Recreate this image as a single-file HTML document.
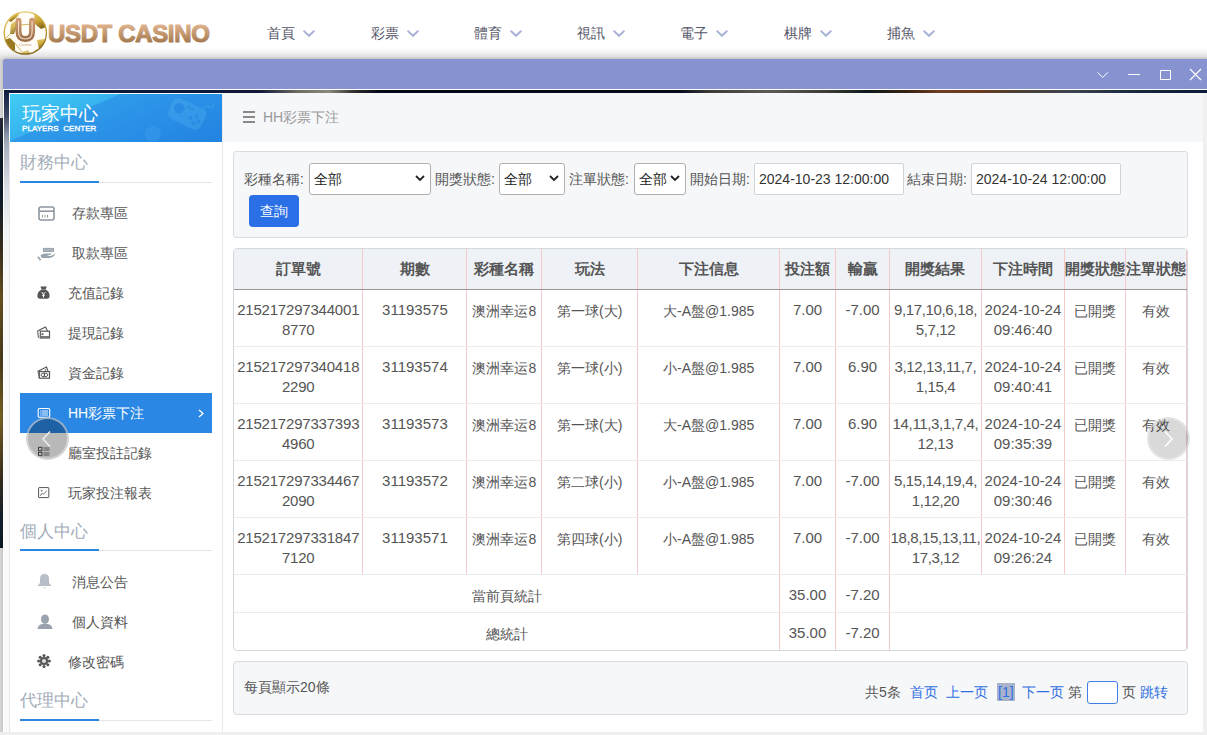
<!DOCTYPE html>
<html><head><meta charset="utf-8">
<style>
*{margin:0;padding:0;box-sizing:border-box}
html,body{width:1207px;height:735px;overflow:hidden;background:#fff;font-family:"Liberation Sans",sans-serif;position:relative}
.a{position:absolute}
/* header */
#logo{left:3px;top:10px;width:46px;height:46px}
#brand{left:47px;top:19px;font-size:24px;font-weight:bold;letter-spacing:-0.6px;white-space:nowrap;line-height:30px;background:linear-gradient(180deg,#dcb18c 25%,#a57a4e 80%);-webkit-background-clip:text;background-clip:text;color:transparent;-webkit-text-stroke:1.1px #b48860}
.nav{top:24px;font-size:14px;color:#555568;line-height:18px;white-space:nowrap}
.nav svg{position:absolute;left:36px;top:6px}
/* page bg */
#pgray{left:0;top:59px;width:1207px;height:676px;background:#dcdcdc}
#pshadow{left:0;top:48px;width:1207px;height:11px;background:linear-gradient(180deg,rgba(0,0,0,0),rgba(0,0,0,.13))}
#pdark{left:0;top:118px;width:3px;height:430px;background:linear-gradient(180deg,#2a2e38 0px,#0e1a2a 30px,#101c2c 80px,#3a3020 130px,#6a5420 180px,#4a3c1c 240px,#7a6224 300px,#3a3020 360px,#152030 400px,#0e1a28 430px)}
/* modal */
#modal{left:3px;top:59px;width:1210px;height:673px;background:#fff;border-radius:2px 0 0 0;box-shadow:0 0 4px rgba(0,0,0,.25)}
#title{left:3px;top:59px;width:1204px;height:30px;background:#8792d0;border-radius:2px 0 0 0}
#mbg{left:4px;top:90px;width:1203px;height:642px;background:linear-gradient(180deg,#0d1a3a 0px,#16244a 5px,#3a4560 25px,#8a93a8 45px,#a8b0c0 55px,#d8dce4 95px,#f2f3f5 140px,#fafafa 200px,#fafafa 100%)}
#panel{left:9px;top:93px;width:1194px;height:639px;background:#fff;border:1px solid #fff}
#side{left:10px;top:94px;width:213px;height:638px;background:#fff;border-right:1px solid #e8eaee}
#shead{left:10px;top:94px;width:212px;height:48px;background:linear-gradient(157deg,#41cdf4 0%,#37b3ef 33.5%,#2e9ae9 34.5%,#2a90e7 60%,#2183e1 100%);overflow:hidden}
.sec{left:20px;font-size:17px;color:#a3adb9;line-height:20px;white-space:nowrap}
.secl{left:20px;width:192px;height:1px;background:#e3e6ea}
.secb{left:20px;width:79px;height:2px;background:#2a86e0}
.item{left:20px;width:192px;height:40px}
.item .t{position:absolute;top:11px;font-size:14px;color:#555;line-height:18px;white-space:nowrap}
.item svg{position:absolute}
#active{background:#2a87e3}
/* content */
#chead{left:223px;top:93px;width:980px;height:49px;background:#f6f7f9}
#crumb{left:243px;top:108px;font-size:14px;color:#999;line-height:18px;white-space:nowrap}
#filter{left:233px;top:151px;width:955px;height:87px;background:#f6f7f9;border:1px solid #d9dde2;border-radius:3px}
.lbl{top:170px;font-size:14px;color:#555;line-height:18px;white-space:nowrap}
.sel{top:163px;height:32px;background:#fff;border:1px solid #b0b0b0;border-radius:3px;font-size:14px;color:#222;line-height:30px;padding-left:4px;white-space:nowrap}
.sel svg{position:absolute;right:5px;top:11px}
.inp{top:163px;height:32px;background:#fff;border:1px solid #d0d4d9;border-radius:2px;font-size:14px;color:#333;line-height:30px;padding-left:4px;white-space:nowrap}
#btn{left:249px;top:195px;width:50px;height:32px;background:#2a6fe6;border-radius:4px;color:#fff;font-size:14px;line-height:32px;text-align:center}
/* table */
#tbl{left:233px;top:248px;width:955px;height:403px;border:1px solid #d3d8de;border-radius:4px;overflow:hidden;background:#fff}
table{border-collapse:collapse;table-layout:fixed;position:absolute;left:0;top:0}
th{height:40px;padding-top:2px !important;background:#eef2f6;font-size:15px;font-weight:bold;color:#555;border-right:1px solid #f3c9c9;border-bottom:1px solid #9e9696;padding:0;white-space:nowrap;overflow:visible}
td{height:57px;font-size:14px;color:#555;border-right:1px solid #f3c9c9;border-bottom:1px solid #ebebeb;text-align:center;vertical-align:top;padding-top:12px;line-height:19px;white-space:nowrap}
.n{font-size:15px;position:relative;top:-2px}
.o{letter-spacing:-0.2px}
.r{letter-spacing:-0.35px}
tr.s td{height:38px;vertical-align:top;padding-top:12px}
/* pager */
#pager{left:233px;top:661px;width:955px;height:54px;background:#f6f7f9;border:1px solid #d5dbe0;border-radius:4px}
.pg{top:683px;font-size:14px;line-height:18px;color:#555;white-space:nowrap}
.bl{color:#2f6fe2}
/* carousel arrows */
.circ{width:43px;height:43px;border-radius:50%;border:2px solid rgba(235,235,235,.55)}
</style></head><body>
<div class="a" id="pgray"></div>
<div class="a" id="pshadow"></div>
<div class="a" id="pdark"></div>
<!-- header -->
<svg class="a" style="left:2px;top:9px" width="48" height="48" viewBox="0 0 48 48">
  <defs>
    <linearGradient id="gold" x1="0" y1="0" x2=".3" y2="1"><stop offset="0" stop-color="#e9cf6a"/><stop offset=".55" stop-color="#c9a436"/><stop offset="1" stop-color="#8a6a1e"/></linearGradient>
    <linearGradient id="cu" x1="0" y1="0" x2="0" y2="1"><stop offset="0" stop-color="#cf9b72"/><stop offset="1" stop-color="#9c6e46"/></linearGradient>
    <clipPath id="cc"><circle cx="23.3" cy="24" r="21.6"/></clipPath>
  </defs>
  <circle cx="23.3" cy="24" r="21.6" fill="#fffdf6"/>
  <g clip-path="url(#cc)" fill="url(#gold)">
    <path d="M5 11 Q11 5 18 3.5 L15 8 L9 13 Z"/>
    <path d="M32 4 L41 9 L44 18 L39 20 L33 15 Z"/>
    <path d="M9 15 L13 12 L16 16 L12 25 L8 25 Z" opacity=".85"/>
    <path d="M2 31 L8 29 L13 34 L13 41 L8 43 L3 38 Z" fill="#9a7820"/>
    <path d="M35 31 L42 30 L45 32 L43 39 L37 40 Z"/>
    <path d="M20 43 L26 41 L29 46 L19 46 Z" opacity=".7"/>
    <path d="M13 34 L20 43 M29 46 L35 40 M16 16 L32 15 M8 25 L2 31" stroke="#c9a436" stroke-width=".8" fill="none"/>
  </g>
  <circle cx="23.3" cy="24" r="21.1" fill="none" stroke="url(#gold)" stroke-width="1.3"/>
  <path d="M16.5 11.8 V22.5 Q16.5 30 23.3 30 Q30.1 30 30.1 22.5 V11.8" fill="none" stroke="url(#cu)" stroke-width="6" stroke-linecap="round"/>
  <path d="M16.5 12.5 V22.5 Q16.5 30 23.3 30 Q30.1 30 30.1 22.5 V12.5" fill="none" stroke="#f6eadc" stroke-width="1.1" stroke-linecap="round" opacity=".9"/>
  <text x="23.3" y="36.5" font-family="Liberation Sans" font-size="4" fill="#c9a07c" text-anchor="middle">Casino</text>
</svg>
<svg class="a" style="left:46px;top:18px" width="170" height="30" viewBox="0 0 170 30"><defs><linearGradient id="bg1" x1="0" y1="0" x2="0" y2="1"><stop offset=".2" stop-color="#dcb08a"/><stop offset=".85" stop-color="#a3784e"/></linearGradient></defs><text x="2" y="24" font-family="Liberation Sans" font-weight="bold" font-size="24" letter-spacing="-0.35" fill="url(#bg1)" stroke="url(#bg1)" stroke-width="1.1" stroke-linejoin="round">USDT CASINO</text></svg>
<div class="a nav" style="left:267px">首頁<svg width="12" height="7" viewBox="0 0 12 7"><path d="M1.2 1.2 L6 5.8 L10.8 1.2" fill="none" stroke="#a8b2d6" stroke-width="1.9" stroke-linecap="round"/></svg></div>
<div class="a nav" style="left:371px">彩票<svg width="12" height="7" viewBox="0 0 12 7"><path d="M1.2 1.2 L6 5.8 L10.8 1.2" fill="none" stroke="#a8b2d6" stroke-width="1.9" stroke-linecap="round"/></svg></div>
<div class="a nav" style="left:474px">體育<svg width="12" height="7" viewBox="0 0 12 7"><path d="M1.2 1.2 L6 5.8 L10.8 1.2" fill="none" stroke="#a8b2d6" stroke-width="1.9" stroke-linecap="round"/></svg></div>
<div class="a nav" style="left:577px">視訊<svg width="12" height="7" viewBox="0 0 12 7"><path d="M1.2 1.2 L6 5.8 L10.8 1.2" fill="none" stroke="#a8b2d6" stroke-width="1.9" stroke-linecap="round"/></svg></div>
<div class="a nav" style="left:680px">電子<svg width="12" height="7" viewBox="0 0 12 7"><path d="M1.2 1.2 L6 5.8 L10.8 1.2" fill="none" stroke="#a8b2d6" stroke-width="1.9" stroke-linecap="round"/></svg></div>
<div class="a nav" style="left:784px">棋牌<svg width="12" height="7" viewBox="0 0 12 7"><path d="M1.2 1.2 L6 5.8 L10.8 1.2" fill="none" stroke="#a8b2d6" stroke-width="1.9" stroke-linecap="round"/></svg></div>
<div class="a nav" style="left:887px">捕魚<svg width="12" height="7" viewBox="0 0 12 7"><path d="M1.2 1.2 L6 5.8 L10.8 1.2" fill="none" stroke="#a8b2d6" stroke-width="1.9" stroke-linecap="round"/></svg></div>

<!-- modal -->
<div class="a" id="modal"></div>
<div class="a" id="title"></div>
<svg class="a" style="left:1096px;top:71px" width="14" height="8" viewBox="0 0 14 8"><path d="M1.5 1.3 L6.7 6.5 L11.9 1.3" fill="none" stroke="#fff" stroke-width="1"/></svg>
<div class="a" style="left:1128px;top:74px;width:12px;height:1px;background:#fff"></div>
<div class="a" style="left:1160px;top:70px;width:11px;height:10px;border:1px solid #fff"></div>
<svg class="a" style="left:1189px;top:68px" width="13" height="13" viewBox="0 0 13 13"><path d="M1 1 L12 12 M12 1 L1 12" stroke="#fff" stroke-width="1.2"/></svg>
<div class="a" id="mbg"></div>
<div class="a" style="left:9px;top:90px;width:1198px;height:3px;background:linear-gradient(90deg,#0e1a3a 0px,#10193a 250px,#6e6e66 290px,#8a8a80 320px,#303030 345px,#05081a 370px,#060a1c 670px,#3a3a3a 700px,#5a5a58 760px,#3a3a38 820px,#0a1a1a 860px,#3a2418 900px,#6e3c22 930px,#6a3a22 970px,#4a4038 1010px,#3e4450 1060px,#1a2a40 1120px,#0a1a3a 1198px)"></div>
<div class="a" id="panel"></div>
<div class="a" style="left:9px;top:142px;width:1px;height:590px;background:#e6e6e6"></div>

<!-- sidebar -->
<div class="a" id="side"></div>
<div class="a" id="shead">
  <svg style="position:absolute;left:114px;top:0" width="94" height="47" viewBox="0 0 82 47">
    <g transform="translate(57 20) rotate(25) scale(.95) translate(-57 -20)">
      <path d="M38 14 Q38 8 46 8 L68 8 Q76 8 76 14 L76 24 Q76 32 68 32 L46 32 Q38 32 38 24 Z" fill="#5cb8f2" opacity=".28"/>
      <circle cx="47" cy="18" r="5.5" fill="#2587e2" opacity=".7"/>
      <circle cx="62" cy="22" r="2" fill="#2587e2" opacity=".7"/><circle cx="67" cy="18" r="2" fill="#2587e2" opacity=".7"/><circle cx="67" cy="26" r="2" fill="#2587e2" opacity=".7"/><circle cx="71" cy="22" r="2" fill="#2587e2" opacity=".7"/>
      <path d="M54 13 H58 M59 13 H62" stroke="#2587e2" stroke-width="1.5" opacity=".7"/>
      <path d="M70 8 Q72 2 76 3 Q79 4 78 -2" fill="none" stroke="#5cb8f2" stroke-width="1" opacity=".4"/>
    </g>
    <circle cx="23" cy="40" r="8" fill="#5cb8f2" opacity=".18"/>
  </svg>
  <div class="a" style="left:12px;top:9px;font-size:18.5px;color:#fff;line-height:22px;white-space:nowrap">玩家中心</div>
  <div class="a" style="left:12px;top:30px;font-size:8px;font-weight:normal;-webkit-text-stroke:0.35px #fff;color:#fff;line-height:10px;white-space:nowrap;letter-spacing:0.05px">PLAYERS&nbsp; CENTER</div>
</div>

<div class="a sec" style="top:153px">財務中心</div>
<div class="a secl" style="top:182px"></div>
<div class="a secb" style="top:181px"></div>

<div class="a item" style="top:193px">
  <svg style="left:18px;top:13px" width="17" height="15" viewBox="0 0 17 15"><rect x="1" y="1" width="15" height="13" rx="2" fill="none" stroke="#8d97a1" stroke-width="1.6"/><path d="M1 5.2 H16" stroke="#8d97a1" stroke-width="1.6"/><path d="M4.5 9 V11.5 M7 9 V11.5 M9.5 9 V11.5" stroke="#8d97a1" stroke-width="1"/></svg>
  <span class="t" style="left:52px">存款專區</span></div>
<div class="a item" style="top:233px">
  <svg style="left:16px;top:13px" width="20" height="16" viewBox="0 0 20 16"><rect x="7.3" y="2.3" width="10.2" height="3.3" fill="#a9b2ba" stroke="#8f9aa4" stroke-width=".8"/><path d="M4.5 9.6 Q6 7.7 9 7.5 L15.3 7.5 Q15.6 8.8 13.8 9.1 L11 9.3 Q12.5 10.1 14.5 9.9 Q17 9.5 19.3 7.2 Q19.2 9 16.7 11 Q14.5 12.3 11 12.1 L7.5 12.1 Q6 12.1 5.4 11.6 Z" fill="#97a3ad"/><path d="M2 10.8 L4.6 14.3" stroke="#97a3ad" stroke-width="1.8"/></svg>
  <span class="t" style="left:52px">取款專區</span></div>
<div class="a item" style="top:273px">
  <svg style="left:16px;top:12px" width="15" height="15" viewBox="0 0 15 15"><path d="M4.4 1.4 L10.8 1.4 L9.6 4.5 L5.6 4.5 Z" fill="#555"/><path d="M5.6 4.6 L9.6 4.6 Q13.6 6.6 13.6 11 Q13.6 13.8 11 13.8 L4 13.8 Q1.4 13.8 1.4 11 Q1.4 6.6 5.6 4.6 Z" fill="#555"/><path d="M5.8 7.2 L7.5 9.3 L9.2 7.2 M7.5 9.3 V12.5 M6.2 10.3 H8.8" stroke="#fff" stroke-width="1" fill="none"/></svg>
  <span class="t" style="left:48px">充值記錄</span></div>
<div class="a item" style="top:313px">
  <svg style="left:16px;top:12px" width="15" height="14" viewBox="0 0 15 14"><path d="M1.5 6 L9.5 2 L11.5 6" fill="none" stroke="#555" stroke-width="1.1"/><path d="M1.5 6 L2.5 13" stroke="#666" stroke-width="1.1"/><rect x="4.3" y="6.2" width="9.2" height="6.8" fill="none" stroke="#555" stroke-width="1.2"/><rect x="5.5" y="8.2" width="2" height="2" fill="#666"/><rect x="4.5" y="11" width="9" height="2" fill="#777"/></svg>
  <span class="t" style="left:48px">提現記錄</span></div>
<div class="a item" style="top:353px">
  <svg style="left:16px;top:12px" width="15" height="14" viewBox="0 0 15 14"><path d="M1.5 6.5 L10.5 2 L12 6" fill="none" stroke="#555" stroke-width="1.1"/><circle cx="9.5" cy="5" r=".8" fill="#555"/><rect x="3.3" y="6.6" width="10.2" height="6.6" fill="none" stroke="#555" stroke-width="1.2"/><ellipse cx="8.4" cy="9.9" rx="3.4" ry="1.9" fill="none" stroke="#555" stroke-width="1"/><path d="M8.4 8 V11.8" stroke="#555" stroke-width="1.2"/><path d="M2 6.5 L3.3 13" stroke="#666" stroke-width="1"/></svg>
  <span class="t" style="left:48px">資金記錄</span></div>
<div class="a item" id="active" style="top:393px">
  <svg style="left:17px;top:14px" width="14" height="12" viewBox="0 0 14 12"><rect x="1.2" y="1.5" width="11.5" height="8.8" rx="1.2" fill="none" stroke="#fff" stroke-width="1.1"/><path d="M4.5 4 H11 M4.5 6 H11 M4.5 8 H11" stroke="#fff" stroke-width=".9"/><path d="M3 4 H3.8 M3 6 H3.8 M3 8 H3.8" stroke="#fff" stroke-width=".9"/></svg>
  <span class="t" style="left:48px;color:#fff">HH彩票下注</span>
  <svg style="left:178px;top:16px" width="7" height="9" viewBox="0 0 7 9"><path d="M1 1 L5 4.5 L1 8" fill="none" stroke="#fff" stroke-width="1.3"/></svg></div>
<div class="a item" style="top:433px">
  <svg style="left:17px;top:13px" width="14" height="12" viewBox="0 0 14 12"><rect x="1.5" y="1.3" width="3.4" height="3.4" fill="none" stroke="#555" stroke-width="1"/><rect x="1.5" y="6.3" width="3.4" height="3.4" fill="none" stroke="#555" stroke-width="1"/><path d="M6.5 2 H12.5 M6.5 4 H12.5 M6.5 7 H12.5 M6.5 9 H12.5" stroke="#666" stroke-width=".9"/></svg>
  <span class="t" style="left:48px">廳室投註記錄</span></div>
<div class="a item" style="top:473px">
  <svg style="left:17px;top:13px" width="14" height="13" viewBox="0 0 14 13"><rect x="1.6" y="1.6" width="10.2" height="10" rx=".5" fill="none" stroke="#555" stroke-width="1"/><path d="M3.3 9.8 L4.8 7.3 L6.2 8.3 L9.8 5" fill="none" stroke="#666" stroke-width=".9"/><circle cx="4.6" cy="4.6" r=".9" fill="#777"/></svg>
  <span class="t" style="left:48px">玩家投注報表</span></div>

<div class="a sec" style="top:522px">個人中心</div>
<div class="a secl" style="top:550px"></div>
<div class="a secb" style="top:549px"></div>

<div class="a item" style="top:562px">
  <svg style="left:17px;top:11px" width="15" height="16" viewBox="0 0 15 16"><path d="M7.5 1 Q12 1 12 6 L12 10 L14.5 13 L0.5 13 L3 10 L3 6 Q3 1 7.5 1 Z" fill="#b8bec6"/><path d="M6 14.5 L9 14.5 L7.5 15.5 Z" fill="#b8bec6"/></svg>
  <span class="t" style="left:52px">消息公告</span></div>
<div class="a item" style="top:602px">
  <svg style="left:17px;top:12px" width="16" height="16" viewBox="0 0 16 16"><ellipse cx="8" cy="5.2" rx="4" ry="4.8" fill="#9aa3ad"/><path d="M0.5 15 Q1 10.5 5.5 10 L10.5 10 Q15 10.5 15.5 15 Z" fill="#9aa3ad"/></svg>
  <span class="t" style="left:52px">個人資料</span></div>
<div class="a item" style="top:642px">
  <svg style="left:17px;top:12px" width="14" height="14" viewBox="0 0 14 14"><g fill="#555"><circle cx="7" cy="7" r="4.1"/><circle cx="7" cy="1.6" r="1.5"/><circle cx="7" cy="12.4" r="1.5"/><circle cx="1.6" cy="7" r="1.5"/><circle cx="12.4" cy="7" r="1.5"/><circle cx="3.2" cy="3.2" r="1.5"/><circle cx="10.8" cy="3.2" r="1.5"/><circle cx="3.2" cy="10.8" r="1.5"/><circle cx="10.8" cy="10.8" r="1.5"/></g><circle cx="7" cy="7" r="2.1" fill="#ddd"/></svg>
  <span class="t" style="left:48px">修改密碼</span></div>

<div class="a sec" style="top:691px">代理中心</div>
<div class="a secl" style="top:720px"></div>
<div class="a secb" style="top:719px"></div>

<!-- content -->
<div class="a" id="chead"></div>
<div class="a" style="left:243px;top:111px;width:12px;height:2px;background:#8a8a8a"></div><div class="a" style="left:243px;top:116px;width:12px;height:2px;background:#8a8a8a"></div><div class="a" style="left:243px;top:121px;width:12px;height:2px;background:#8a8a8a"></div>
<div class="a" id="crumb" style="left:263px">HH彩票下注</div>

<div class="a" id="filter"></div>
<div class="a lbl" style="left:244px">彩種名稱:</div>
<div class="a sel" style="left:309px;width:122px">全部<svg width="10" height="7" viewBox="0 0 10 7"><path d="M1 1 L5 5 L9 1" fill="none" stroke="#222" stroke-width="1.8"/></svg></div>
<div class="a lbl" style="left:435px">開獎狀態:</div>
<div class="a sel" style="left:499px;width:66px">全部<svg width="10" height="7" viewBox="0 0 10 7"><path d="M1 1 L5 5 L9 1" fill="none" stroke="#222" stroke-width="1.8"/></svg></div>
<div class="a lbl" style="left:569px">注單狀態:</div>
<div class="a sel" style="left:634px;width:52px">全部<svg width="10" height="7" viewBox="0 0 10 7"><path d="M1 1 L5 5 L9 1" fill="none" stroke="#222" stroke-width="1.8"/></svg></div>
<div class="a lbl" style="left:690px">開始日期:</div>
<div class="a inp" style="left:754px;width:150px">2024-10-23 12:00:00</div>
<div class="a lbl" style="left:907px">結束日期:</div>
<div class="a inp" style="left:971px;width:150px">2024-10-24 12:00:00</div>
<div class="a" id="btn">查詢</div>

<div class="a" id="tbl">
<table>
<colgroup><col style="width:129px"><col style="width:104px"><col style="width:75px"><col style="width:96px"><col style="width:142px"><col style="width:56px"><col style="width:54px"><col style="width:92px"><col style="width:83px"><col style="width:61px"><col style="width:61px"></colgroup>
<tr><th>訂單號</th><th>期數</th><th>彩種名稱</th><th>玩法</th><th>下注信息</th><th>投注額</th><th>輸贏</th><th>開獎結果</th><th>下注時間</th><th>開獎狀態</th><th>注單狀態</th></tr>
<tr><td><span class="n o">215217297344001<br>8770</span></td><td><span class="n">31193575</span></td><td>澳洲幸运8</td><td>第一球(大)</td><td>大-A盤@1.985</td><td><span class="n">7.00</span></td><td><span class="n">-7.00</span></td><td><span class="n r">9,17,10,6,18,<br>5,7,12</span></td><td><span class="n">2024-10-24<br>09:46:40</span></td><td>已開獎</td><td>有效</td></tr>
<tr><td><span class="n o">215217297340418<br>2290</span></td><td><span class="n">31193574</span></td><td>澳洲幸运8</td><td>第一球(小)</td><td>小-A盤@1.985</td><td><span class="n">7.00</span></td><td><span class="n">6.90</span></td><td><span class="n r">3,12,13,11,7,<br>1,15,4</span></td><td><span class="n">2024-10-24<br>09:40:41</span></td><td>已開獎</td><td>有效</td></tr>
<tr><td><span class="n o">215217297337393<br>4960</span></td><td><span class="n">31193573</span></td><td>澳洲幸运8</td><td>第一球(大)</td><td>大-A盤@1.985</td><td><span class="n">7.00</span></td><td><span class="n">6.90</span></td><td><span class="n r">14,11,3,1,7,4,<br>12,13</span></td><td><span class="n">2024-10-24<br>09:35:39</span></td><td>已開獎</td><td>有效</td></tr>
<tr><td><span class="n o">215217297334467<br>2090</span></td><td><span class="n">31193572</span></td><td>澳洲幸运8</td><td>第二球(小)</td><td>小-A盤@1.985</td><td><span class="n">7.00</span></td><td><span class="n">-7.00</span></td><td><span class="n r">5,15,14,19,4,<br>1,12,20</span></td><td><span class="n">2024-10-24<br>09:30:46</span></td><td>已開獎</td><td>有效</td></tr>
<tr><td><span class="n o">215217297331847<br>7120</span></td><td><span class="n">31193571</span></td><td>澳洲幸运8</td><td>第四球(小)</td><td>小-A盤@1.985</td><td><span class="n">7.00</span></td><td><span class="n">-7.00</span></td><td><span class="n r">18,8,15,13,11,<br>17,3,12</span></td><td><span class="n">2024-10-24<br>09:26:24</span></td><td>已開獎</td><td>有效</td></tr>
<tr class="s"><td colspan="5">當前頁統計</td><td><span class="n">35.00</span></td><td><span class="n">-7.20</span></td><td colspan="4"></td></tr>
<tr class="s"><td colspan="5">總統計</td><td><span class="n">35.00</span></td><td><span class="n">-7.20</span></td><td colspan="4"></td></tr>
</table>
</div>

<div class="a" id="pager"></div>
<div class="a pg" style="left:244px;top:678px">每頁顯示20條</div>
<div class="a pg" style="left:865px">共5条</div>
<div class="a pg bl" style="left:910px">首页</div>
<div class="a pg bl" style="left:946px">上一页</div>
<div class="a pg bl" style="left:997px;background:#a9b3cb;padding:0 1px">[1]</div>
<div class="a pg bl" style="left:1022px">下一页</div>
<div class="a pg" style="left:1068px">第</div>
<div class="a" style="left:1087px;top:681px;width:31px;height:23px;border:1px solid #3f7fe6;border-radius:3px;background:#fff"></div>
<div class="a pg" style="left:1122px">页</div>
<div class="a pg bl" style="left:1140px">跳转</div>

<div class="a" style="left:1203px;top:93px;width:4px;height:642px;background:#f0f0f0"></div>
<div class="a" style="left:0;top:732px;width:1207px;height:3px;background:#efefef"></div>

<!-- carousel arrows -->
<div class="a circ" style="left:26px;top:417px;background:rgba(0,0,0,.28)"></div>
<svg class="a" style="left:41px;top:430px" width="11" height="18" viewBox="0 0 11 18"><path d="M9 1.5 L2 9 L9 16.5" fill="none" stroke="#eee" stroke-width="1.5"/></svg>
<div class="a circ" style="left:1147px;top:417px;background:rgba(0,0,0,.15)"></div>
<svg class="a" style="left:1163px;top:430px" width="11" height="18" viewBox="0 0 11 18"><path d="M2 1.5 L9 9 L2 16.5" fill="none" stroke="#fff" stroke-width="1.5"/></svg>
</body></html>
